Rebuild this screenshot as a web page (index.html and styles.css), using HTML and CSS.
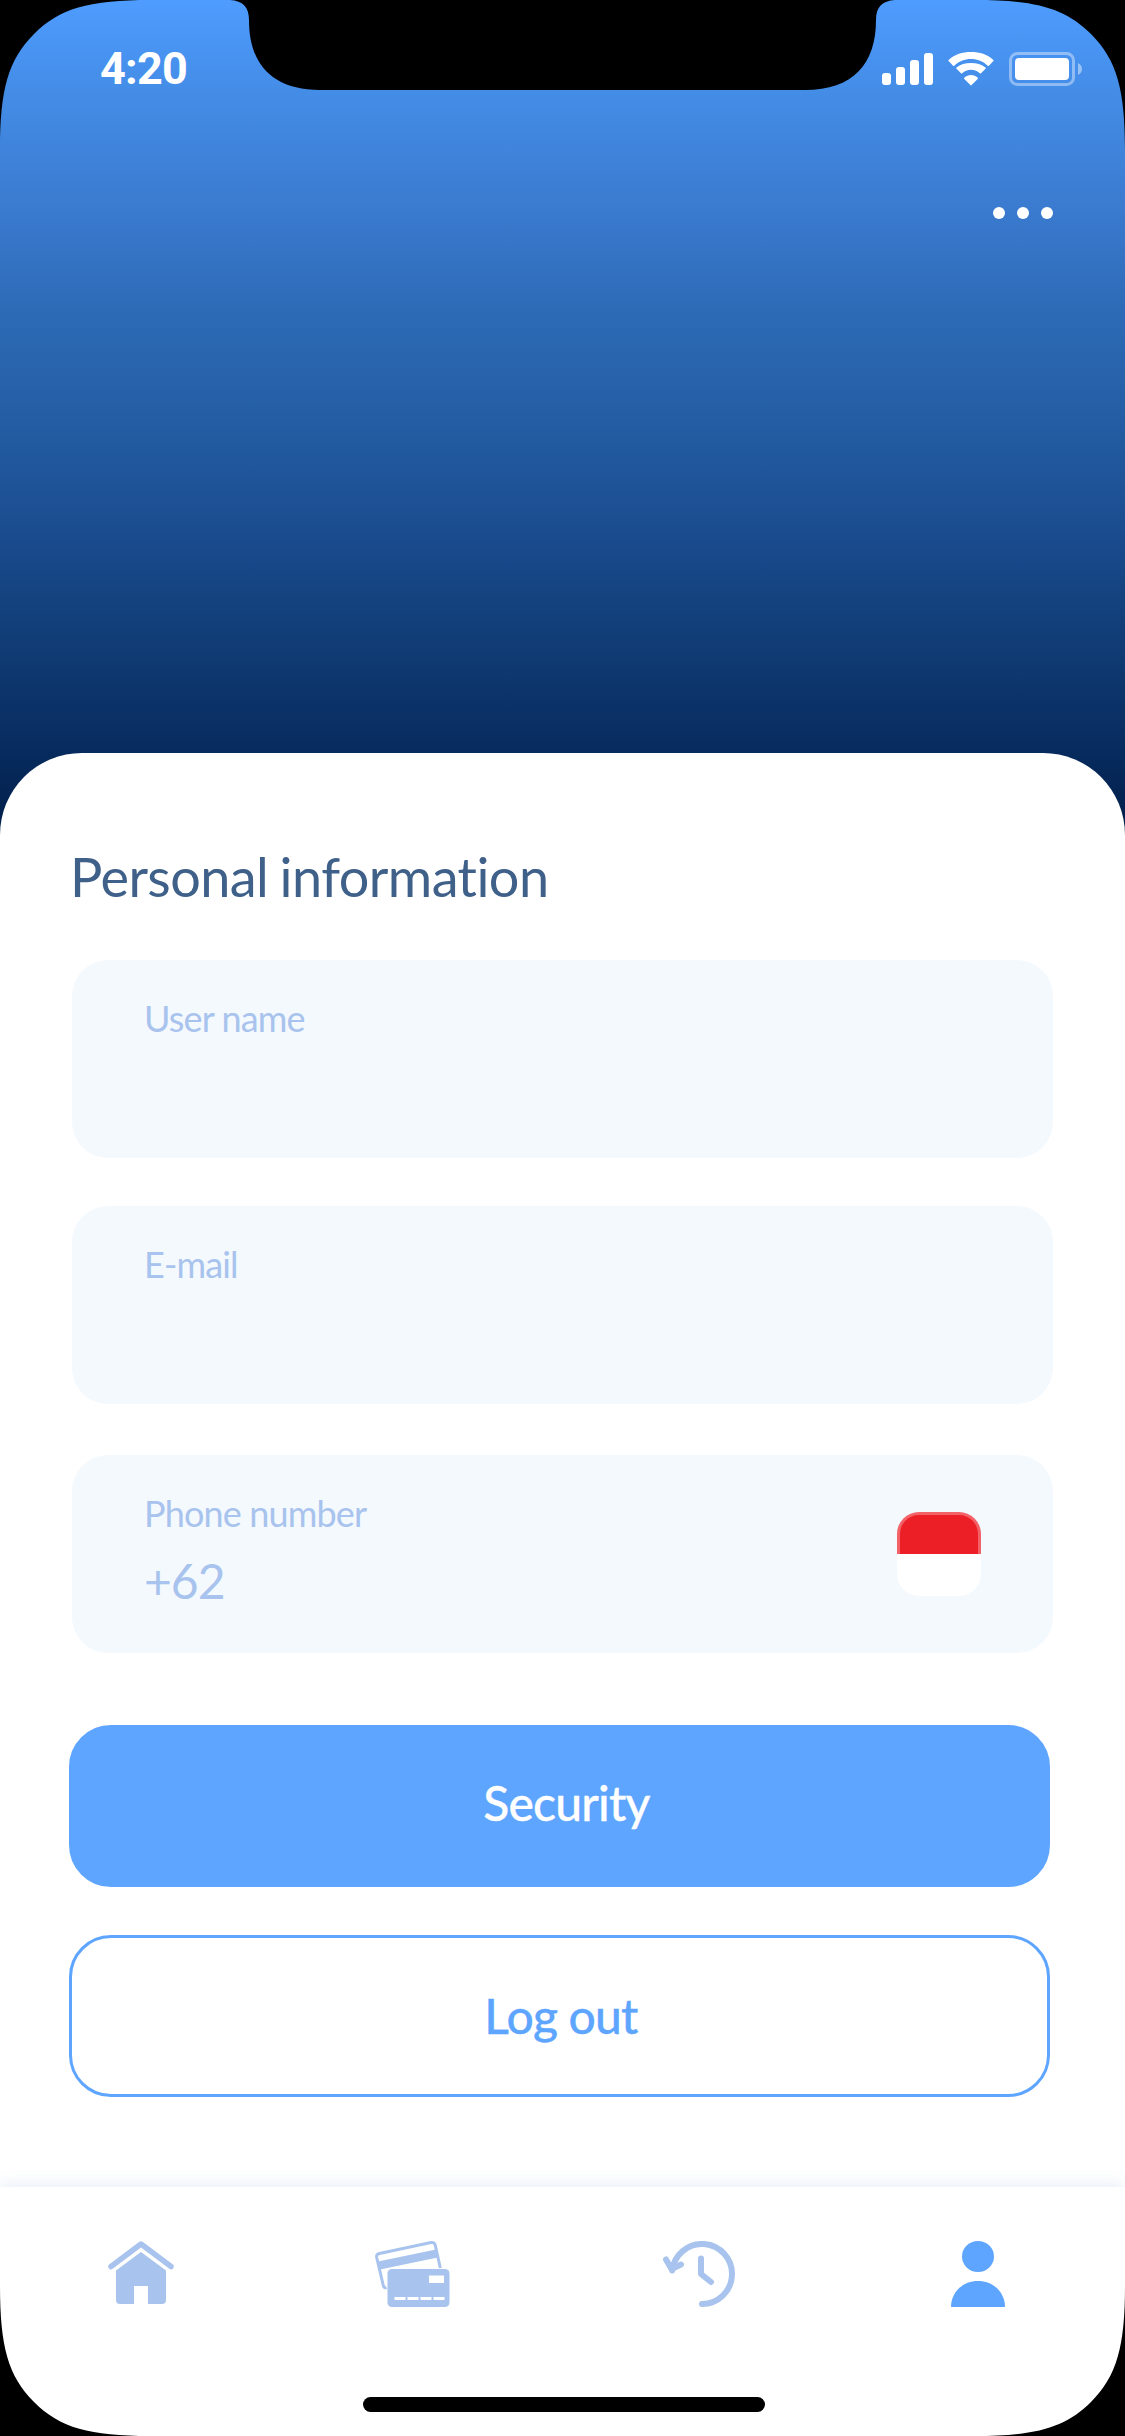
FILE: index.html
```html
<!DOCTYPE html>
<html lang="en">
<head>
<meta charset="utf-8">
<title>Profile</title>
<link rel="stylesheet" href="styles.css">
</head>
<body>
<div class="phone">
  <header class="header">
    <div class="status">
      <span class="time">4:20</span>
      <svg class="status-icons" width="202" height="36" viewBox="0 0 202 36" fill="#fff">
        <rect x="0" y="22" width="9" height="12" rx="3"/>
        <rect x="14" y="16" width="9" height="18" rx="3"/>
        <rect x="28" y="9" width="9" height="25" rx="3"/>
        <rect x="42" y="2" width="9" height="32" rx="3"/>
        <path d="M89 8.1c6.400 0 12.300 2.500 16.700 6.600.4.3.9.3 1.200 0l4.500-4.600c.4-.4.4-.9 0-1.200C105.400 3.300 97.500 1 89 1S72.600 3.300 66.600 8.900c-.4.300-.4.800 0 1.200l4.500 4.600c.3.300.8.300 1.200 0C76.700 10.600 82.600 8.100 89 8.100z"/>
        <path d="M89 18.800c3.400 0 6.500 1.300 8.800 3.400.4.300.8.300 1.200 0l4.500-4.500c.4-.4.4-.9 0-1.200C99.700 13.300 94.600 12 89 12s-10.700 1.300-14.500 4.500c-.4.300-.4.800 0 1.200l4.500 4.500c.4.300.8.300 1.200 0 2.300-2.100 5.400-3.400 8.800-3.400z"/>
        <path d="M95.700 26.800c.4.300.4.800 0 1.200l-6.100 6.100c-.3.400-.9.400-1.200 0L82.300 28c-.4-.4-.4-.9 0-1.200 3.700-3.700 9.700-3.700 13.400 0z"/>
        <rect x="128.500" y="2.500" width="63" height="31" rx="7" fill="none" stroke="#fff" stroke-opacity=".4" stroke-width="3"/>
        <rect x="133" y="7" width="54" height="22" rx="4"/>
        <path d="M196 12c5.300 2.600 5.300 9.400 0 12z" fill-opacity=".45"/>
      </svg>
    </div>
    <button class="more" aria-label="More"><i></i><i></i><i></i></button>
  </header>

  <main class="sheet">
    <h1 class="title">Personal information</h1>
    <div class="field">
      <div class="label">User name</div>
    </div>
    <div class="field">
      <div class="label">E-mail</div>
    </div>
    <div class="field field-phone">
      <div>
        <div class="label">Phone number</div>
        <div class="value">+62</div>
      </div>
      <div class="flag"></div>
    </div>
    <button class="btn btn-primary">Security</button>
    <button class="btn btn-outline">Log out</button>
  </main>

  <nav class="tabs">
    <svg width="66" height="66" viewBox="0 0 66 66" fill="#a8c3ed">
      <path d="M3 25.500 33 3 63 25.500" fill="none" stroke="#a8c3ed" stroke-width="5.500" stroke-linecap="round" stroke-linejoin="round"/>
      <path d="M33 11 58 29.500V59q0 4-4 4H40V45H26v18H12q-4 0-4-4V29.500z"/>
    </svg>
    <svg class="tab-cards" width="76" height="66" viewBox="0 0 76 66" fill="#a8c3ed">
      <path d="M11.500 46.500Q9 47.500 8.300 44.500L1.700 16.500Q1.100 13.200 4.500 12.500L56 1.500Q59.300 1 60.200 4L65.300 27" fill="none" stroke="#a8c3ed" stroke-width="3"/>
      <path d="M3 20.500 61 8.500 62.700 16.500 5 28.500z"/>
      <rect x="12.500" y="28" width="62" height="38" rx="4.500"/>
      <rect x="54" y="34.500" width="15" height="7.500" fill="#fff"/>
      <path d="M19.500 57.500h11m2 0h11m2 0h11m2 0h11" stroke="#fff" stroke-width="3"/>
    </svg>
    <svg class="tab-history" width="72" height="66" viewBox="0 0 72 66" fill="none" stroke="#a8c3ed" stroke-width="6" stroke-linecap="round" stroke-linejoin="round">
      <path d="M39 63A30 30 0 1 0 9.200 29.500"/>
      <path d="M3 18.500 8.500 28 18 23.500"/>
      <path d="M38 17.500V33L48 41"/>
    </svg>
    <svg class="tab-profile" width="54" height="66" viewBox="0 0 54 66" fill="#5ea5ff">
      <ellipse cx="27" cy="15.500" rx="16" ry="15.500"/>
      <path d="M0 66C0 51 12 40 27 40S54 51 54 66z"/>
    </svg>
    <div class="home-bar"></div>
  </nav>

  <svg class="bezel" width="1125" height="2436" viewBox="0 0 1125 2436">
    <path d="M0 0H150C90 0 60 8 34 34S0 90 0 150z"/>
    <path d="M1125 0H975C1035 0 1065 8 1091 34S1125 90 1125 150z"/>
    <path d="M0 2436H150C90 2436 60 2428 34 2402S0 2346 0 2286z"/>
    <path d="M1125 2436H975C1035 2436 1065 2428 1091 2402S1125 2346 1125 2286z"/>
    <path d="M230 0C243 1 249 7 249 20C249 64 272 90 320 90H805C853 90 876 64 876 20C876 7 882 1 895 0z"/>
  </svg>
</div>
</body>
</html>
```
FILE: styles.css
```css
* { box-sizing: border-box; }
body { margin: 0; }

.phone {
  position: relative;
  display: flex;
  flex-direction: column;
  width: 1125px;
  height: 2436px;
  overflow: hidden;
  background: #fff;
  font-family: Lato, "Liberation Sans", sans-serif;
}

.bezel { position: absolute; inset: 0; pointer-events: none; }

.header {
  height: 836px;
  flex: none;
  padding: 51px 41px 0 100px;
  background: linear-gradient(#4e9cff 0, #448de7 90px, #3b7bd0 205px, #2d6bb7 310px, #225a9f 445px, #1b4c90 530px, #123f79 625px, #082c60 745px, #001d48 836px);
}

.status { display: flex; justify-content: space-between; height: 36px; }

.time {
  font: 700 45px/36px Roboto, sans-serif;
  letter-spacing: -.8px;
  color: #fff;
}

.more {
  display: flex;
  gap: 12px;
  margin: 120px 31px 0 auto;
  padding: 0;
  border: 0;
  background: none;
}
.more i { width: 12px; height: 12px; border-radius: 50%; background: #fff; }

.sheet {
  display: flex;
  flex-direction: column;
  flex: none;
  height: 1434px;
  margin-top: -83px;
  padding: 90px 75px 0 72px;
  border-radius: 82px 82px 0 0;
  background: #fff;
}

.title {
  margin: 0 0 49px -2px;
  font-size: 54px;
  font-weight: 400;
  line-height: 68px;
  letter-spacing: -.55px;
  word-spacing: -2px;
  color: #3e6089;
}

.field {
  flex: none;
  width: 981px;
  height: 198px;
  margin-bottom: 48px;
  padding: 35px 72px 0;
  border-radius: 36px;
  background: #f4f9fe;
  color: #a8c3ed;
}
.field-phone {
  display: flex;
  justify-content: space-between;
  margin: 3px 0 72px;
}
.label { font-size: 36px; line-height: 46px; letter-spacing: -.85px; }
.value { font-size: 48px; line-height: 60px; margin-top: 15px; letter-spacing: -1px; }

.flag {
  width: 84px;
  height: 84px;
  margin-top: 22px;
  border: 3px solid rgba(255, 255, 255, .3);
  border-radius: 22px;
  background: linear-gradient(#ed1f26 50%, #fff 50%) border-box;
}

.btn {
  flex: none;
  width: 981px;
  height: 162px;
  margin: 0 0 48px -3px;
  padding: 0;
  border: 3px solid #5ea5ff;
  border-radius: 42px;
  font: 500 48px/60px Lato, sans-serif;
  letter-spacing: -.8px;
  -webkit-text-stroke: .3px currentColor;
}
.btn-primary { padding: 0 0 6px 14px; background: #5ea5ff; color: #fff; }
.btn-outline { padding-left: 3px; background: #fff; color: #5ea5ff; }

.tabs {
  position: relative;
  display: flex;
  height: 249px;
  padding: 54px 120px 0 108px;
  background: #fff;
  box-shadow: 0 -4px 14px rgba(60, 110, 190, .1);
}
.tab-cards { margin-left: 201px; }
.tab-history { margin-left: 212px; }
.tab-profile { margin-left: 216px; }

.home-bar {
  position: absolute;
  left: 363px;
  bottom: 24px;
  width: 402px;
  height: 15px;
  border-radius: 8px;
  background: #000;
}
```
